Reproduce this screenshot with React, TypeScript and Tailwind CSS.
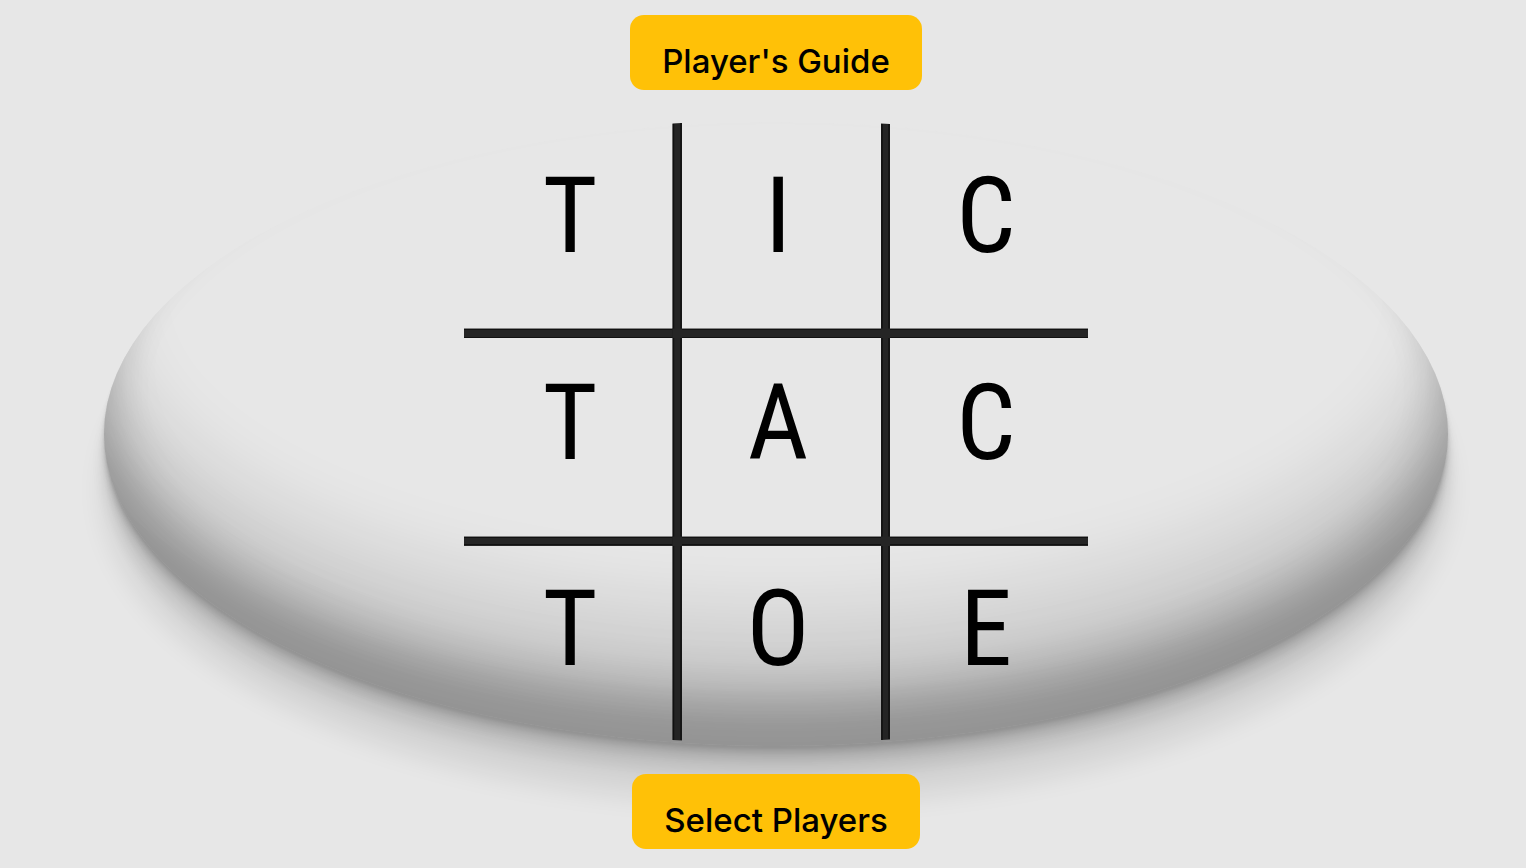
const rows: string[][] = [
  ["T", "I", "C"],
  ["T", "A", "C"],
  ["T", "O", "E"],
];

function ActionButton({ label }: { label: string }) {
  return (
    <button
      type="button"
      className="h-[75px] cursor-pointer rounded-[14px] bg-[#ffc107] px-8 pt-4 font-['Inter',sans-serif] text-[33px] font-medium leading-10 text-black"
    >
      {label}
    </button>
  );
}

function GridLines() {
  return (
    <svg viewBox="0 0 624 624" className="absolute inset-0 size-full" aria-hidden="true">
      <path d="M0 206.5H624V216H0Z M0 414.5H624V424H0Z" fill="#252525" />
      <path d="M0 207.500H624 M0 215.500H624 M0 415.500H624 M0 422.500H624" stroke="#111" strokeWidth="1" />
      <path d="M208.500 1.500L218 1V618.500L208.500 618Z M417 1.500L426 2V617.500L417 618Z" fill="#242424" />
      <path d="M217 1V618 M209.500 2V618 M418 2V618 M425 2V617" stroke="#101010" strokeWidth="1.500" />
      <path d="M208.500 206.500H218V216H208.500Z M208.500 414.500H218V424H208.500Z M417 206.500H426V216H417Z M417 414.500H426V424H417Z" fill="#252525" />
    </svg>
  );
}

export default function App() {
  return (
    <main className="flex min-h-screen flex-col items-center bg-[#e7e7e7] pb-[19px] pl-[104px] pr-[78px] pt-[15px]">
      <ActionButton label="Player's Guide" />
      <section className="mb-7 mt-8 flex w-full justify-center rounded-[50%] bg-[#e7e7e7] shadow-[inset_0_-40px_44px_0_rgba(0,0,0,0.17),inset_0_-63px_52px_0_rgba(0,0,0,0.15),inset_0_-138px_70px_0_rgba(0,0,0,0.1),0_3px_2px_rgba(0,0,0,0.06),0_7px_4px_rgba(0,0,0,0.09),0_14px_7px_rgba(0,0,0,0.09),0_28px_14px_rgba(0,0,0,0.09),0_56px_28px_rgba(0,0,0,0.09)]">
        <h1 className="relative grid size-[624px] grid-cols-[212px_204px_212px] grid-rows-[211px_202px_211px]">
          <GridLines />
          {rows.map((row, y) =>
            row.map((letter, x) => (
              <span
                key={`${y}-${x}`}
                className="relative flex items-center justify-center pb-[22px] font-['Roboto_Condensed','Roboto',sans-serif] text-[105px] font-normal leading-none text-black"
              >
                {letter}
              </span>
            )),
          )}
        </h1>
      </section>
      <ActionButton label="Select Players" />
    </main>
  );
}
